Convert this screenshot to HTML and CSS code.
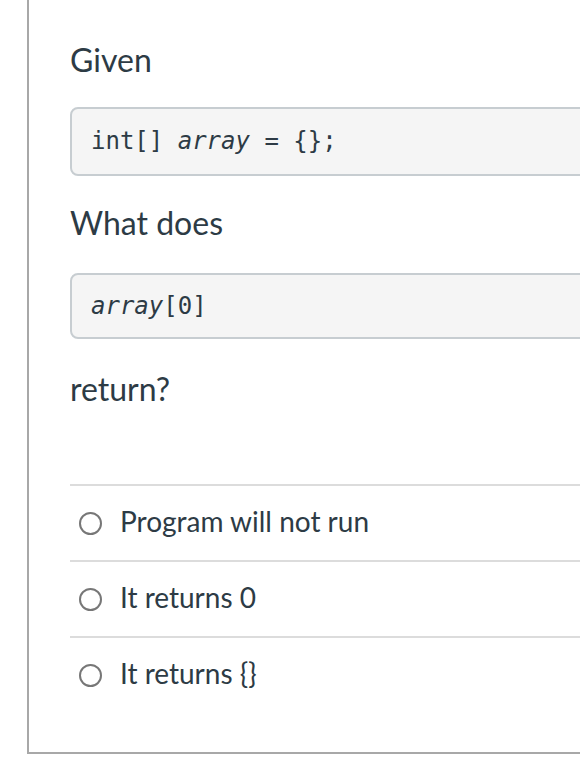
FILE: index.html
```html
<!DOCTYPE html>
<html lang="en">
<head>
<meta charset="utf-8">
<title>Question</title>
<link rel="stylesheet" href="styles.css">
</head>
<body>
<div class="question">
  <p class="text given">Given</p>
  <pre class="code code-first"><code>int[] <em>array</em> = {};</code></pre>
  <p class="text what">What does</p>
  <pre class="code code-second"><code><em>array</em>[0]</code></pre>
  <p class="text ret">return?</p>
  <div class="answers">
    <label class="answer"><span class="radio"></span><span class="answer-text">Program will not run</span></label>
    <label class="answer"><span class="radio"></span><span class="answer-text">It returns 0</span></label>
    <label class="answer"><span class="radio"></span><span class="answer-text">It returns {}</span></label>
  </div>
</div>
</body>
</html>
```
FILE: styles.css
```css
html, body {
  margin: 0;
  padding: 0;
  background: #fff;
  overflow: hidden;
}
body {
  width: 580px;
  height: 776px;
}
.question {
  margin-left: 27px;
  width: 700px;
  border-left: 2px solid #a8a8a8;
  border-bottom: 2px solid #a8a8a8;
  padding: 40px 0 40px 41px;
  box-sizing: border-box;
  font-family: Lato, "Liberation Sans", sans-serif;
  color: #2d3b45;
}
.text {
  margin: 0;
  font-size: 32px;
  line-height: 40px;
}
.code {
  margin: 0;
  background: #f5f5f5;
  border: 2px solid #c7cdd1;
  border-radius: 8px;
  padding: 14px 19px;
  font-family: "DejaVu Sans Mono", monospace;
  font-size: 24px;
  line-height: 37px;
  color: #2d3b45;
}
.code em {
  font-style: italic;
}
.code-first { margin-top: 27px; }
.what { margin-top: 27px; }
.code-second { margin-top: 30px; padding: 13px 19px 12px; }
.ret { margin-top: 30px; }
.answers {
  margin-top: 75px;
}
.answer {
  display: flex;
  align-items: center;
  gap: 18px;
  border-top: 2px solid #dcdcdc;
  padding: 15px 0 19px 9px;
  font-size: 28px;
  line-height: 40px;
}
.radio {
  width: 19px;
  height: 19px;
  margin-top: 4px;
  border: 2px solid #777;
  border-radius: 50%;
  flex: none;
}
```
